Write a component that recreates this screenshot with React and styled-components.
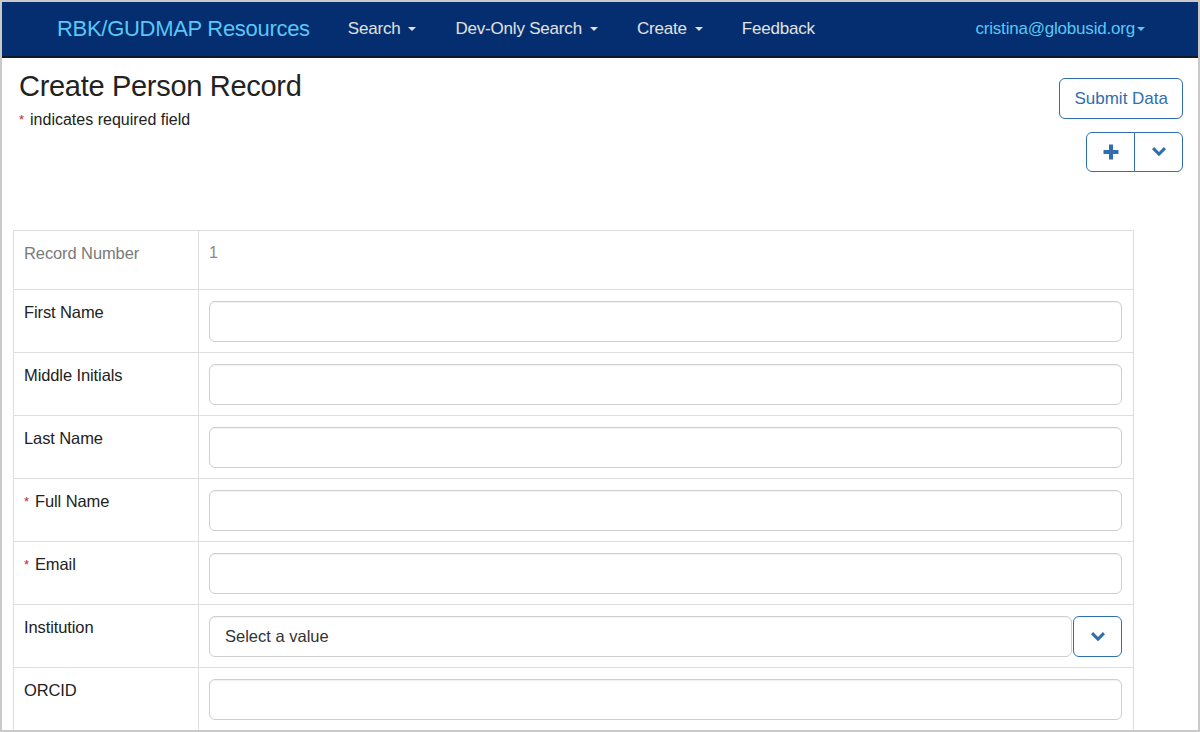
import React from "react";
import styled, { createGlobalStyle } from "styled-components";

const GlobalStyle = createGlobalStyle`
  html, body {
    margin: 0;
    padding: 0;
    background: #fff;
  }
  body {
    font-family: "Liberation Sans", Arial, sans-serif;
    color: #333;
  }
  * {
    box-sizing: border-box;
  }
`;

const Frame = styled.div`
  width: 1200px;
  height: 732px;
  border: 2px solid #c9c9c9;
  overflow: hidden;
  background: #fff;
`;

const Navbar = styled.nav`
  height: 56px;
  background: #042e6f;
  border-bottom: 2px solid #10182a;
  display: flex;
  align-items: center;
  padding: 0 53px 1px 55px;
`;

const Brand = styled.a`
  font-size: 22px;
  color: #5cc6f5;
  margin-right: 38px;
  letter-spacing: -0.3px;
`;

const NavItem = styled.a`
  font-size: 17px;
  color: #e2e2e2;
  margin-right: 39px;
  display: flex;
  align-items: center;
  letter-spacing: -0.2px;
`;

const UserMenu = styled(NavItem)`
  margin-left: auto;
  margin-right: 0;
  color: #5cc6f5;
`;

const Caret = styled.span`
  display: inline-block;
  width: 0;
  height: 0;
  margin-left: ${(p) => (p.$tight ? "2px" : "8px")};
  border-top: 4px solid currentColor;
  border-left: 4px solid transparent;
  border-right: 4px solid transparent;
`;

const Header = styled.div`
  display: flex;
  justify-content: space-between;
  align-items: flex-start;
  padding: 0 15px 0 17px;
  height: 172px;
`;

const TitleBlock = styled.div`
  padding-top: 10px;
`;

const Title = styled.h1`
  margin: 0;
  font-size: 29px;
  font-weight: 400;
  line-height: 36px;
  color: #222;
  letter-spacing: -0.3px;
`;

const Note = styled.p`
  margin: 6px 0 0 0;
  font-size: 16px;
  line-height: 20px;
  color: #222;
`;

const Req = styled.span`
  color: #b52a2a;
  font-size: 13px;
  vertical-align: 1px;
  margin-right: 6px;
`;

const Actions = styled.div`
  padding-top: 20px;
  display: flex;
  flex-direction: column;
  align-items: flex-end;
  gap: 13px;
`;

const OutlineButton = styled.button`
  font-family: inherit;
  height: 41px;
  padding: 0 14px;
  font-size: 17px;
  color: #2f6eaf;
  background: #fff;
  border: 1px solid #2f6eaf;
  border-radius: 6px;
`;

const Group = styled.div`
  display: flex;
`;

const GroupButton = styled.button`
  width: ${(p) => p.$w || 48}px;
  height: 40px;
  display: flex;
  align-items: center;
  justify-content: center;
  background: #fff;
  border: 1px solid #2f6eaf;
  color: #2f6eaf;
  padding: 0;
  border-radius: ${(p) => (p.$first ? "6px 0 0 6px" : "0 6px 6px 0")};
  margin-left: ${(p) => (p.$first ? "0" : "-1px")};
`;

const TableWrap = styled.div`
  padding: 0 0 0 11px;
`;

const Table = styled.div`
  width: 1121px;
  border: 1px solid #dedede;
  border-bottom: none;
`;

const Row = styled.div`
  display: grid;
  grid-template-columns: 184px 1fr;
  border-top: ${(p) => (p.$first ? "none" : "1px solid #dedede")};
  min-height: ${(p) => (p.$first ? "58px" : "63px")};
`;

const LabelCell = styled.div`
  padding: 12px 10px 0 10px;
  font-size: 16.5px;
  line-height: 20px;
  letter-spacing: -0.1px;
  color: ${(p) => (p.$muted ? "#7a7a7a" : "#222")};
`;

const ValueCell = styled.div`
  border-left: 1px solid #dedede;
  padding: 11px 11px 10px 10px;
  display: flex;
  gap: 1px;
`;

const StaticValue = styled.div`
  font-size: 16px;
  line-height: 20px;
  color: #8a8a8a;
  padding-top: 1px;
`;

const Input = styled.div`
  flex: 1;
  height: 41px;
  border: 1px solid #cfcfcf;
  border-radius: 6px;
  box-shadow: inset 0 1px 1px rgba(0, 0, 0, 0.06);
  background: #fff;
  display: flex;
  align-items: center;
  padding-left: 15px;
  font-size: 16.5px;
  color: #333;
`;

const SelectButton = styled.button`
  width: 49px;
  height: 41px;
  background: #fff;
  border: 1px solid #2f6eaf;
  border-radius: 6px;
  color: #2f6eaf;
  display: flex;
  align-items: center;
  justify-content: center;
  padding: 0;
`;

const PlusIcon = () => (
  <svg width="18" height="18" viewBox="0 0 18 18">
    <path d="M7 1.5h4v5.5h5.5v4H11v5.5H7V11H1.5V7H7z" fill="currentColor" />
  </svg>
);

const ChevronIcon = () => (
  <svg width="16" height="12" viewBox="0 0 16 12">
    <path d="M1 3.2 3.1 1.1 8 6 12.9 1.1 15 3.2 8 10.2z" fill="currentColor" />
  </svg>
);

const fields = [
  { label: "First Name" },
  { label: "Middle Initials" },
  { label: "Last Name" },
  { label: "Full Name", required: true },
  { label: "Email", required: true },
  { label: "Institution", select: true },
  { label: "ORCID" },
];

export default function App() {
  return (
    <>
      <GlobalStyle />
      <Frame>
        <Navbar>
          <Brand>RBK/GUDMAP Resources</Brand>
          <NavItem>
            Search <Caret />
          </NavItem>
          <NavItem>
            Dev-Only Search <Caret />
          </NavItem>
          <NavItem>
            Create <Caret />
          </NavItem>
          <NavItem>Feedback</NavItem>
          <UserMenu>
            cristina@globusid.org
            <Caret $tight />
          </UserMenu>
        </Navbar>

        <Header>
          <TitleBlock>
            <Title>Create Person Record</Title>
            <Note>
              <Req>*</Req>indicates required field
            </Note>
          </TitleBlock>
          <Actions>
            <OutlineButton>Submit Data</OutlineButton>
            <Group>
              <GroupButton $first $w={49}>
                <PlusIcon />
              </GroupButton>
              <GroupButton $w={49}>
                <ChevronIcon />
              </GroupButton>
            </Group>
          </Actions>
        </Header>

        <TableWrap>
          <Table>
            <Row $first>
              <LabelCell $muted>Record Number</LabelCell>
              <ValueCell>
                <StaticValue>1</StaticValue>
              </ValueCell>
            </Row>
            {fields.map((f) => (
              <Row key={f.label}>
                <LabelCell>
                  {f.required && <Req>*</Req>}
                  {f.label}
                </LabelCell>
                <ValueCell>
                  {f.select ? (
                    <>
                      <Input>Select a value</Input>
                      <SelectButton>
                        <ChevronIcon />
                      </SelectButton>
                    </>
                  ) : (
                    <Input />
                  )}
                </ValueCell>
              </Row>
            ))}
          </Table>
        </TableWrap>
      </Frame>
    </>
  );
}
